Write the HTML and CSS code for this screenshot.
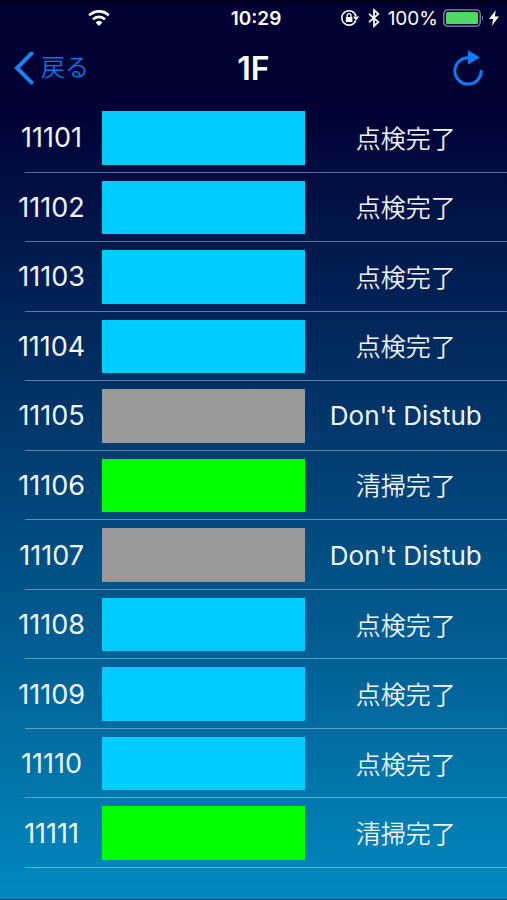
FILE: index.html
```html
<!DOCTYPE html>
<html lang="ja">
<head>
<meta charset="utf-8">
<meta name="viewport" content="width=device-width, initial-scale=1">
<title>1F</title>
<link rel="stylesheet" href="styles.css">
</head>
<body>
<div class="screen">
  <div class="status">
    <div class="status-left">
      <svg class="wifi" width="24" height="18" viewBox="0 0 24 18" aria-hidden="true">
        <path d="M2.2 6.4a14 14 0 0 1 19.6 0M6 10.4a8.6 8.6 0 0 1 12 0" fill="none" stroke="currentColor" stroke-width="2.7"/>
        <path d="M12 17l-3.4-3.6a5 5 0 0 1 6.8 0z" fill="currentColor"/>
      </svg>
    </div>
    <span class="time">10:29</span>
    <div class="status-right">
      <svg width="20" height="18" viewBox="0 0 20 18" aria-hidden="true">
        <path d="M15.7 11.6A7.2 7.2 0 1 1 16 7.2" fill="none" stroke="currentColor" stroke-width="1.6"/>
        <path d="M13 7.6h6.2L16.1 11.8z" fill="currentColor"/>
        <rect x="5.8" y="8" width="6.6" height="5" rx=".6" fill="currentColor"/>
        <path d="M7.2 8.4V6.6a1.9 1.9 0 0 1 3.8 0v1.8" fill="none" stroke="currentColor" stroke-width="1.3"/>
      </svg>
      <svg class="bluetooth" width="12" height="20" viewBox="0 0 12 20" aria-hidden="true">
        <path d="M1 5.8l9.4 8.2L6 18V2l4.4 4L1 14.2" fill="none" stroke="currentColor" stroke-width="1.7"/>
      </svg>
      <span class="percent">100%</span>
      <svg class="battery" width="42" height="18" viewBox="0 0 42 18" aria-hidden="true">
        <rect x=".8" y=".8" width="36.4" height="16.4" rx="4" fill="none" stroke="#8e8ea6" stroke-width="1.3"/>
        <rect x="3" y="3" width="32" height="12" rx="1.6" fill="#4cd964"/>
        <path d="M39 6.2q2.2 2.8 0 5.6z" fill="#8e8ea6"/>
      </svg>
      <svg width="10" height="16" viewBox="0 0 10 16" aria-hidden="true">
        <path d="M6.8 0L0 9h4.2L2.8 16 10 6.6H5.8z" fill="currentColor"/>
      </svg>
    </div>
  </div>

  <header class="nav">
    <a class="back" href="#">
      <svg width="20" height="34" viewBox="0 0 20 34" aria-hidden="true">
        <path d="M17.5 2.5L3 17l14.5 14.5" fill="none" stroke="#1683f5" stroke-width="4" stroke-linecap="round"/>
      </svg>
      <span>戻る</span>
    </a>
    <h1 class="title">1F</h1>
    <button class="refresh" type="button" aria-label="更新">
      <svg width="30" height="36" viewBox="0 0 30 36" aria-hidden="true">
        <path d="M16 7.7H15A13.2 13.2 0 1 0 28.2 20" fill="none" stroke="currentColor" stroke-width="3"/>
        <path d="M15 .2L27 7.4 15 14.6z" fill="currentColor"/>
      </svg>
    </button>
  </header>

  <ul class="rooms">
    <li class="room"><span class="number">11101</span><span class="bar checked"></span><span class="state">点検完了</span></li>
    <li class="room"><span class="number">11102</span><span class="bar checked"></span><span class="state">点検完了</span></li>
    <li class="room"><span class="number">11103</span><span class="bar checked"></span><span class="state">点検完了</span></li>
    <li class="room"><span class="number">11104</span><span class="bar checked"></span><span class="state">点検完了</span></li>
    <li class="room"><span class="number">11105</span><span class="bar blocked"></span><span class="state latin">Don't Distub</span></li>
    <li class="room"><span class="number">11106</span><span class="bar cleaned"></span><span class="state">清掃完了</span></li>
    <li class="room"><span class="number">11107</span><span class="bar blocked"></span><span class="state latin">Don't Distub</span></li>
    <li class="room"><span class="number">11108</span><span class="bar checked"></span><span class="state">点検完了</span></li>
    <li class="room"><span class="number">11109</span><span class="bar checked"></span><span class="state">点検完了</span></li>
    <li class="room"><span class="number">11110</span><span class="bar checked"></span><span class="state">点検完了</span></li>
    <li class="room"><span class="number">11111</span><span class="bar cleaned"></span><span class="state">清掃完了</span></li>
  </ul>
</div>
</body>
</html>
```

FILE: styles.css
```css
* {
  box-sizing: border-box;
}

body {
  margin: 0;
  background: #000033;
  color: #f0f6ff;
  font-family: Inter, "Noto Sans CJK JP", sans-serif;
}

.screen {
  display: flex;
  flex-direction: column;
  min-height: 100vh;
  padding-bottom: 31px;
  border-top: 3px solid #00001c;
  border-bottom: 1px solid #003a66;
  background: linear-gradient(#000033 100px, #0089be);
}

.status {
  display: grid;
  grid-template-columns: 1fr auto 1fr;
  align-items: center;
  height: 30px;
  padding: 0 8px;
  color: #ffffff;
  font-size: 19px;
}

.status-left {
  padding-left: 79px;
}

.status-left svg {
  display: block;
}

.time {
  padding-left: 5px;
  font-weight: 600;
}

.status-right {
  display: flex;
  align-items: center;
  justify-content: flex-end;
}

.status-right svg {
  flex: none;
}

.bluetooth {
  margin-left: 8px;
}

.percent {
  margin: 0 5px 0 8px;
}

.battery {
  margin-right: 4px;
}

.nav {
  display: grid;
  grid-template-columns: 1fr auto 1fr;
  align-items: center;
  height: 70px;
  padding: 0 24px 0 14px;
}

.back {
  display: flex;
  align-items: center;
  gap: 7px;
  color: #0f74e8;
  font-size: 24px;
  font-weight: 350;
  line-height: 34px;
  text-decoration: none;
}

.title {
  margin: 0;
  padding-left: 10px;
  color: #ffffff;
  font-size: 32px;
  font-weight: 600;
}

.refresh {
  justify-self: end;
  padding: 0;
  border: 0;
  background: none;
  color: #0a7cff;
}

.refresh svg {
  display: block;
}

.rooms {
  display: grid;
  flex: 1;
  grid-auto-rows: 1fr;
  margin: 0;
  padding: 0;
  list-style: none;
}

.room {
  display: grid;
  grid-template-columns: 20% 40% 40%;
  align-items: center;
  min-height: 60px;
  padding: 8px 0 8px 1px;
  background: linear-gradient(rgba(190, 205, 240, 0.5), rgba(190, 205, 240, 0.5)) 25px 100% / 100% 1px no-repeat;
}

.number {
  font-size: 27px;
  text-align: center;
}

.bar {
  align-self: stretch;
}

.checked {
  background: #00ccff;
}

.cleaned {
  background: #00ff00;
}

.blocked {
  background: #999999;
}

.state {
  padding-bottom: 2px;
  font-size: 25px;
  font-weight: 350;
  text-align: center;
}

.latin {
  padding-bottom: 0;
  font-size: 26px;
  font-weight: 400;
}
```
